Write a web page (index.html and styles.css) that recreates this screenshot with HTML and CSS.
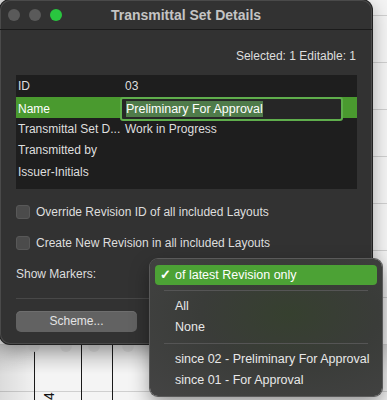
FILE: index.html
```html
<!DOCTYPE html>
<html>
<head>
<meta charset="utf-8">
<link rel="stylesheet" href="styles.css">
</head>
<body>
<div class="canvas">
  <div class="vline dark" style="left:34px"></div>
  <div class="vline dark" style="left:81px"></div>
  <div class="vline dark" style="left:112px"></div>
  <div class="vline light" style="left:28px"></div>
  <div class="vline light" style="left:60px"></div>
  <div class="vline light" style="left:88px"></div>
  <div class="vline light" style="left:122px"></div>
  <div class="glyph4">4</div>
</div>

<div class="window">
  <div class="titlebar">
    <div class="lights">
      <span class="light gray"></span>
      <span class="light gray"></span>
      <span class="light green"></span>
    </div>
    <div class="title">Transmittal Set Details</div>
  </div>
  <div class="content">
    <div class="selinfo">Selected: 1 Editable: 1</div>
    <div class="table">
      <div class="row"><div class="k">ID</div><div class="v">03</div></div>
      <div class="row sel"><div class="k">Name</div><div class="v edit"><div class="editor"><span class="hl">Preliminary For Approval</span></div></div></div>
      <div class="row"><div class="k">Transmittal Set D...</div><div class="v">Work in Progress</div></div>
      <div class="row"><div class="k">Transmitted by</div><div class="v"></div></div>
      <div class="row"><div class="k">Issuer-Initials</div><div class="v"></div></div>
    </div>
    <div class="check first"><span class="box"></span><span>Override Revision ID of all included Layouts</span></div>
    <div class="check"><span class="box"></span><span>Create New Revision in all included Layouts</span></div>
    <div class="markers">Show Markers:</div>
    <div class="sep"></div>
    <div class="buttons"><div class="btn">Scheme...</div></div>
  </div>
</div>

<div class="menu">
  <div class="item checked"><span class="tick">✓</span>of latest Revision only</div>
  <div class="msep"></div>
  <div class="item">All</div>
  <div class="item">None</div>
  <div class="msep"></div>
  <div class="item">since 02 - Preliminary For Approval</div>
  <div class="item">since 01 - For Approval</div>
</div>
</body>
</html>
```

FILE: styles.css
```css
html, body {
  margin: 0;
  padding: 0;
}
body {
  width: 387px;
  height: 400px;
  overflow: hidden;
  position: relative;
  font-family: "Liberation Sans", Arial, sans-serif;
  font-size: 12px;
  background-color: #f4f4f4;
  background-image:
    linear-gradient(to right, rgba(0,0,0,0.10), rgba(0,0,0,0) 40px),
    repeating-linear-gradient(to bottom, transparent 0, transparent 15px, #cfcfcf 15px, #cfcfcf 16px, transparent 16px, transparent 47px);
}
.canvas {
  position: absolute;
  left: 0;
  top: 0;
  width: 387px;
  height: 400px;
  background: linear-gradient(to bottom, rgba(0,0,0,0.12), rgba(0,0,0,0) 30px) 0 345px / 387px 60px no-repeat;
}
.vline {
  position: absolute;
  top: 340px;
  bottom: 0;
  width: 1px;
}
.vline.dark { background: #1a1a1a; }
.vline.light { background: #d0d0d0; }
.glyph4 {
  position: absolute;
  left: 45px;
  top: 388px;
  font-size: 14px;
  color: #111;
  transform: rotate(-90deg);
}

.window {
  position: relative;
  width: 372px;
  height: 344px;
  background: #323232;
  border-radius: 10px;
  box-shadow: 0 0 0 1px #202020, inset 0 0 0 1px #4a4a4a, 0 6px 20px rgba(0,0,0,0.35);
  color: #dedede;
}
.titlebar {
  height: 29px;
  border-bottom: 1px solid #1b1b1b;
  display: flex;
  align-items: center;
  position: relative;
}
.lights {
  display: flex;
  gap: 9px;
  padding-left: 8px;
}
.light {
  width: 12px;
  height: 12px;
  border-radius: 50%;
}
.light.gray { background: #5a5a5a; }
.light.green { background: #29c63f; }
.title {
  position: absolute;
  left: 0;
  right: 0;
  text-align: center;
  font-weight: bold;
  font-size: 14px;
  color: #c4c4c4;
}
.content {
  padding: 0 16px 0 16px;
}
.selinfo {
  text-align: right;
  margin-top: 19px;
  line-height: 15px;
  font-size: 12px;
}
.table {
  margin-top: 11px;
  background: #1e1e1e;
  padding-bottom: 6px;
  width: 341px;
}
.row {
  display: grid;
  grid-template-columns: 104px 1fr;
  height: 21.5px;
  align-items: center;
}
.row .k {
  padding-left: 2px;
  white-space: nowrap;
}
.row .v {
  padding-left: 5px;
}
.row.sel {
  background: #4a9a2f;
  color: #fff;
}
.row .v.edit {
  padding-left: 0;
}
.editor {
  margin-right: 14px;
  height: 20px;
  border: 2px solid #5fae4c;
  border-radius: 3px;
  background: #262626;
  display: flex;
  align-items: center;
  padding-left: 4px;
}
.hl {
  background: #4f7b4a;
  color: #fff;
  line-height: 16px;
  font-size: 12.5px;
}
.check {
  display: flex;
  align-items: center;
  gap: 6px;
  height: 16px;
  margin-top: 15px;
}
.check.first {
  margin-top: 15px;
}
.box {
  width: 12px;
  height: 12px;
  border-radius: 3px;
  background: #4b4b4b;
  border: 1px solid #585858;
}
.markers {
  margin-top: 15px;
  line-height: 16px;
}
.sep {
  margin-top: 16px;
  height: 1px;
  background: #484848;
}
.buttons {
  margin-top: 12px;
}
.btn {
  width: 121px;
  height: 21px;
  border-radius: 5px;
  background: #626262;
  color: #e4e4e4;
  text-align: center;
  line-height: 21px;
  box-shadow: inset 0 1px 0 #6e6e6e;
}

.menu {
  position: absolute;
  left: 150px;
  top: 259px;
  width: 232px;
  padding: 6px 0 5px 0;
  border-radius: 8px;
  background: radial-gradient(ellipse at 60% 40%, #36402f 0%, #3a3c39 45%, #444 100%);
  box-shadow: 0 0 0 1px #5a5a5a, 0 8px 20px rgba(0,0,0,0.4);
  color: #e8e8e8;
  font-size: 12.5px;
}
.item {
  height: 21px;
  line-height: 21px;
  margin: 0 5px;
  padding-left: 20px;
  border-radius: 4px;
  position: relative;
  white-space: nowrap;
}
.item.checked {
  height: 20px;
  line-height: 20px;
  background: #4ca235;
  color: #fff;
}
.tick {
  position: absolute;
  left: 5px;
  font-size: 13px;
  font-weight: bold;
}
.msep {
  height: 1px;
  background: #555;
  margin: 5px 14px;
}
```
